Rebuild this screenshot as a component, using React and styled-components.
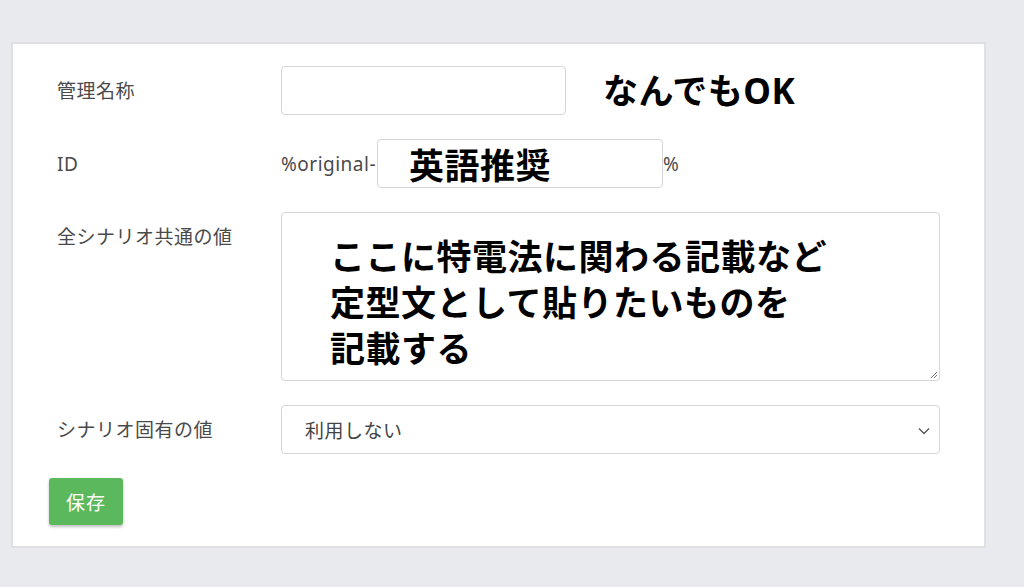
import styled, { createGlobalStyle } from "styled-components";

const GlobalStyle = createGlobalStyle`
  html, body {
    margin: 0;
    padding: 0;
    background-color: #e9eaed;
    font-family: "Noto Sans", "Noto Sans CJK JP", sans-serif;
  }
`;

function App() {
  return (
    <>
      <GlobalStyle />
      <Page>
        <Card>
          <Row>
            <Label>管理名称</Label>
            <Field>
              <TextInput type="text" width="285px" />
              <Note>なんでもOK</Note>
            </Field>
          </Row>
          <Row>
            <Label>ID</Label>
            <Field>
              <Affix>%original-</Affix>
              <FakeInput>英語推奨</FakeInput>
              <Affix>%</Affix>
            </Field>
          </Row>
          <Row>
            <Label>全シナリオ共通の値</Label>
            <Field>
              <TextArea>
                <Note as="div">
                  ここに特電法に関わる記載など
                  <br />
                  定型文として貼りたいものを
                  <br />
                  記載する
                </Note>
                <Grip width="10" height="10" viewBox="0 0 10 10">
                  <path d="M9 3 L3 9 M9 6 L6 9" stroke="#777" strokeWidth="1" />
                </Grip>
              </TextArea>
            </Field>
          </Row>
          <Row>
            <Label>シナリオ固有の値</Label>
            <Field>
              <SelectWrap>
                <Select defaultValue="none">
                  <option value="none">利用しない</option>
                </Select>
                <Chevron width="12" height="8" viewBox="0 0 12 8">
                  <path d="M1 1.5 L6 6.5 L11 1.5" fill="none" stroke="#555" strokeWidth="1.3" />
                </Chevron>
              </SelectWrap>
            </Field>
          </Row>
          <SaveBtn>保存</SaveBtn>
        </Card>
      </Page>
    </>
  );
}

export default App;

const Page = styled.div`
  padding: 42px 38px 39px 11px;
  min-height: 587px;
  box-sizing: border-box;
`;

const Card = styled.div`
  display: flex;
  flex-direction: column;
  gap: 24px;
  padding: 22px 44px 21px 36px;
  background-color: white;
  border: 2px solid #dfe0e3;
`;

const Row = styled.div`
  display: flex;
  align-items: flex-start;
`;

const Label = styled.div`
  width: 232px;
  flex-shrink: 0;
  padding: 2px 0 0 8px;
  box-sizing: border-box;
  line-height: 47px;
  font-size: 19px;
  color: #4a4a4a;
  letter-spacing: 0.5px;
`;

const Field = styled.div`
  flex: 1;
  display: flex;
  align-items: center;
`;

const TextInput = styled.input`
  width: ${({ width }) => width};
  height: 49px;
  box-sizing: border-box;
  border: 1px solid #d4d6da;
  border-radius: 4px;
  outline: none;
  font-size: 18px;
`;

const FakeInput = styled.div`
  width: 286px;
  height: 49px;
  box-sizing: border-box;
  padding-left: 31px;
  border: 1px solid #d4d6da;
  border-radius: 4px;
  display: flex;
  align-items: center;
  font-size: 35px;
  font-weight: bold;
  letter-spacing: 0.5px;
  color: #000;
`;

const Affix = styled.span`
  padding-top: 2px;
  font-size: 19px;
  color: #4a4a4a;
  letter-spacing: 0.5px;
  line-height: 47px;
  margin-right: 1px;
`;

const Note = styled.span`
  margin-left: 37px;
  font-size: 35px;
  font-weight: bold;
  letter-spacing: 0.5px;
  color: #000;
  line-height: 46px;
`;

const TextArea = styled.div`
  position: relative;
  width: 100%;
  height: 169px;
  box-sizing: border-box;
  padding-top: 21px;
  padding-left: 11px;
  border: 1px solid #d4d6da;
  border-radius: 4px;
`;

const Grip = styled.svg`
  position: absolute;
  right: 1px;
  bottom: 1px;
`;

const SelectWrap = styled.div`
  position: relative;
  width: 100%;
`;

const Select = styled.select`
  width: 100%;
  height: 49px;
  box-sizing: border-box;
  padding: 2px 0 0 23px;
  border: 1px solid #d4d6da;
  border-radius: 4px;
  background-color: white;
  appearance: none;
  font-family: "Noto Sans", "Noto Sans CJK JP", sans-serif;
  font-size: 19px;
  color: #444;
  letter-spacing: 0.5px;
  outline: none;
`;

const Chevron = styled.svg`
  position: absolute;
  right: 10px;
  top: 22px;
  pointer-events: none;
`;

const SaveBtn = styled.button`
  align-self: flex-start;
  width: 74px;
  height: 47px;
  padding-top: 2px;
  border: none;
  border-radius: 3px;
  background-color: #5cb85c;
  color: white;
  font-family: "Noto Sans", "Noto Sans CJK JP", sans-serif;
  font-size: 19px;
  letter-spacing: 1px;
  box-shadow: 0 2px 3px rgba(0, 0, 0, 0.25);
  cursor: pointer;
`;
